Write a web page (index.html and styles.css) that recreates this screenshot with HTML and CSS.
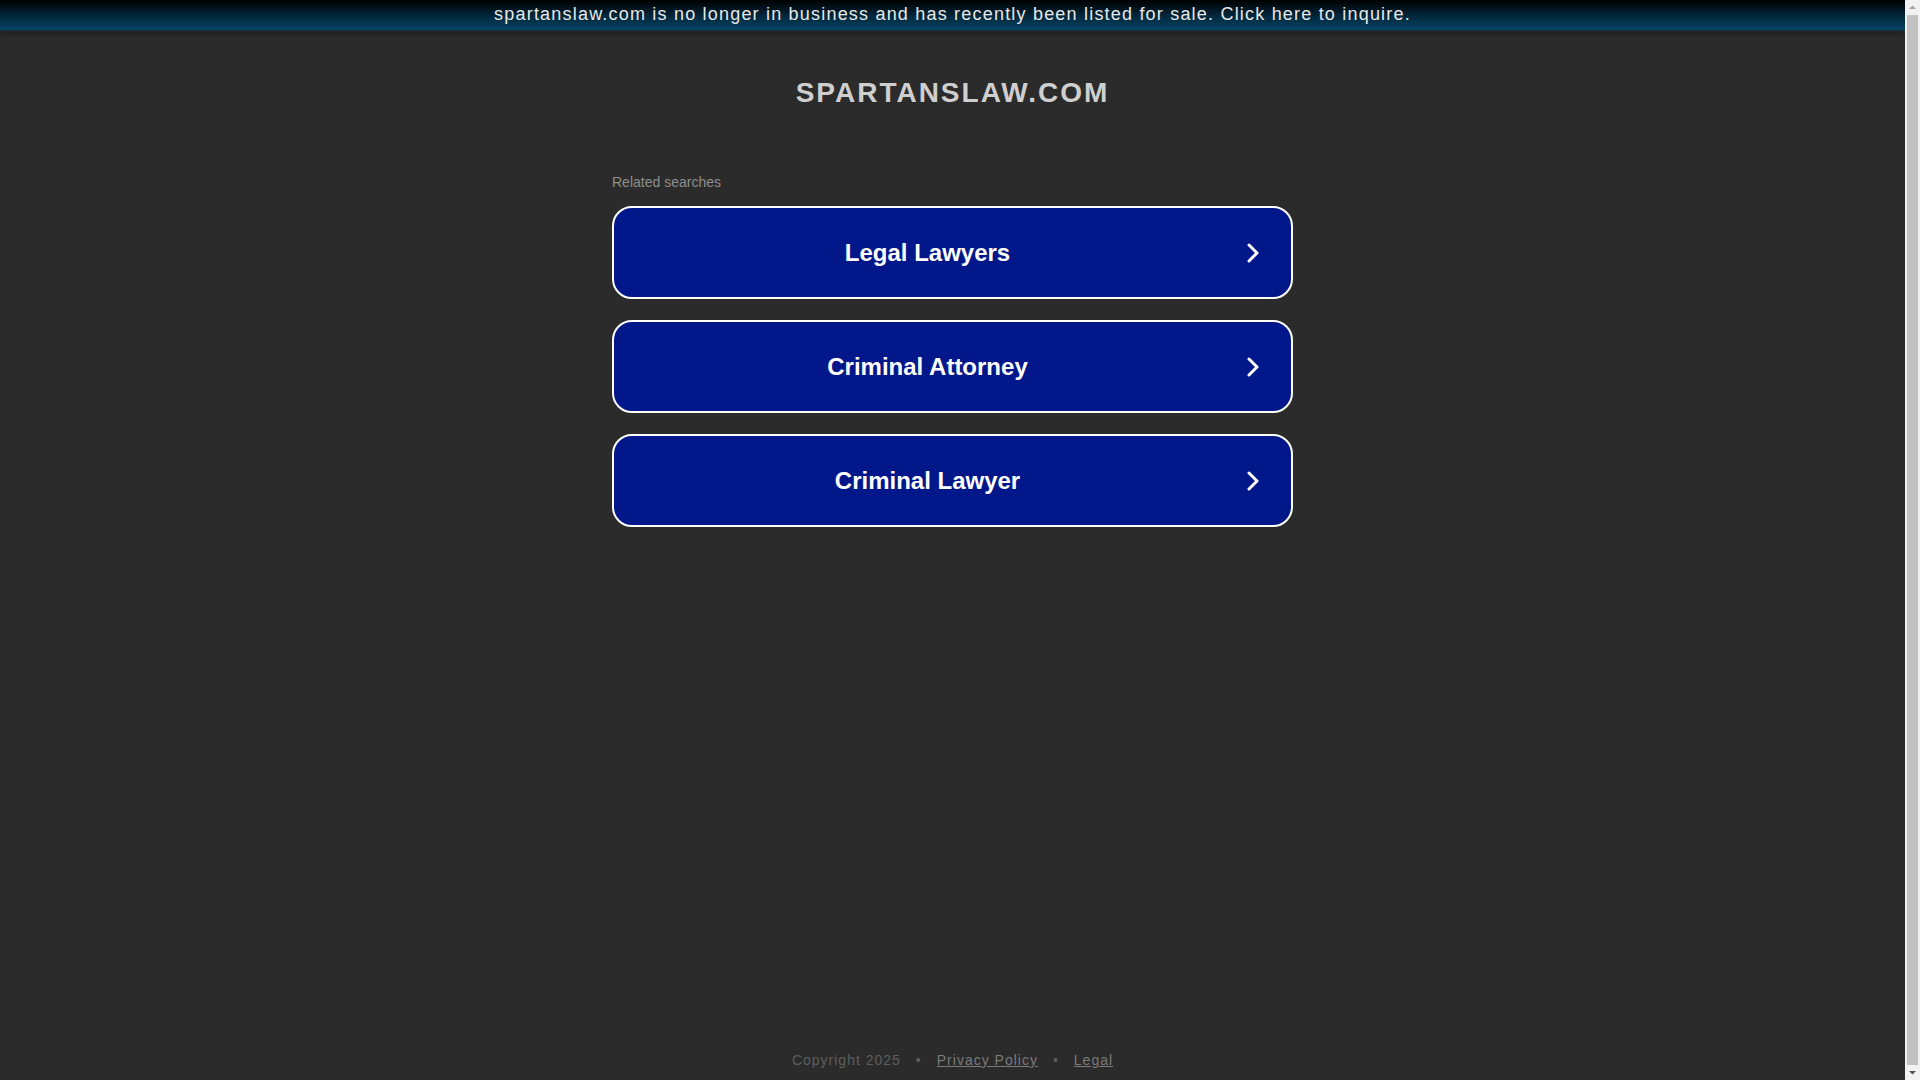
FILE: index.html
```html
<!DOCTYPE html>
<html lang="en">
<head>
<meta charset="utf-8">
<title>spartanslaw.com</title>
<link rel="stylesheet" href="styles.css">
</head>
<body>
<div class="window">
<div class="page">
  <a class="banner" href="#">spartanslaw.com is no longer in business and has recently been listed for sale. Click here to inquire.</a>
  <main class="main">
    <h1 class="title">SPARTANSLAW.COM</h1>
    <div class="related">
      <div class="related-label">Related searches</div>
      <a class="search" href="#">
        <span class="search-text">Legal Lawyers</span>
        <span class="search-arrow"><svg width="12" height="20" viewBox="0 0 12 20"><path d="M2 2 L10 10 L2 18" fill="none" stroke="#fff" stroke-width="3" stroke-linecap="round" stroke-linejoin="round"/></svg></span>
      </a>
      <a class="search" href="#">
        <span class="search-text">Criminal Attorney</span>
        <span class="search-arrow"><svg width="12" height="20" viewBox="0 0 12 20"><path d="M2 2 L10 10 L2 18" fill="none" stroke="#fff" stroke-width="3" stroke-linecap="round" stroke-linejoin="round"/></svg></span>
      </a>
      <a class="search" href="#">
        <span class="search-text">Criminal Lawyer</span>
        <span class="search-arrow"><svg width="12" height="20" viewBox="0 0 12 20"><path d="M2 2 L10 10 L2 18" fill="none" stroke="#fff" stroke-width="3" stroke-linecap="round" stroke-linejoin="round"/></svg></span>
      </a>
    </div>
  </main>
  <footer class="footer">
    <span class="copy">Copyright 2025</span>
    <span class="dot">•</span>
    <a class="flink" href="#">Privacy Policy</a>
    <span class="dot">•</span>
    <a class="flink" href="#">Legal</a>
  </footer>
</div>
<div class="scrollbar">
  <svg class="sb-arrow" width="15" height="15" viewBox="0 0 15 15"><path d="M4 9 L7.5 5.5 L11 9 Z" fill="#a3a3a3"/></svg>
  <div class="sb-thumb"></div>
  <svg class="sb-arrow" width="15" height="15" viewBox="0 0 15 15"><path d="M4 6 L7.5 9.5 L11 6 Z" fill="#505050"/></svg>
</div>
</div>
</body>
</html>
```

FILE: styles.css
```css
html, body {
  margin: 0;
  padding: 0;
  background: #2b2b2b;
  font-family: "Liberation Sans", Arial, sans-serif;
  overflow: hidden;
}
.window {
  display: flex;
  height: 100vh;
}
.page {
  flex: 1;
  min-width: 0;
  display: flex;
  flex-direction: column;
}
.scrollbar {
  width: 15px;
  background: #f1f1f1;
  display: flex;
  flex-direction: column;
}
.sb-arrow {
  display: block;
  flex: none;
}
.sb-thumb {
  flex: 1;
  margin: 0 2px;
  background: #c1c1c1;
}
.banner {
  display: block;
  height: 30px;
  line-height: 28px;
  text-align: center;
  color: #e8e8e8;
  text-decoration: none;
  font-size: 18px;
  letter-spacing: 1.2px;
  background: linear-gradient(to bottom, #000000 0%, #02283d 55%, #064566 100%);
  border-bottom: 2px solid #1d2830;
  box-shadow: 0 2px 6px rgba(0,0,0,0.35);
}
.main {
  flex: 1;
  display: flex;
  flex-direction: column;
  align-items: center;
}
.title {
  margin: 45px 0 0;
  font-size: 28px;
  line-height: 32px;
  font-weight: bold;
  color: #cfcfcf;
  letter-spacing: 2px;
}
.related {
  width: 681px;
  margin-top: 64px;
  display: flex;
  flex-direction: column;
}
.related-label {
  font-size: 14px;
  line-height: 18px;
  color: #8e8e8e;
  margin-bottom: 15px;
}
.search {
  box-sizing: border-box;
  height: 93px;
  margin-bottom: 21px;
  display: flex;
  align-items: center;
  padding: 0 20px;
  background: #02188a;
  border: 2px solid #ffffff;
  border-radius: 20px;
  color: #fff;
  text-decoration: none;
}
.search-text {
  flex: 1;
  text-align: center;
  font-size: 24px;
  font-weight: bold;
}
.search-arrow {
  width: 50px;
  display: flex;
  justify-content: flex-end;
  padding-right: 12px;
  box-sizing: border-box;
}
.footer {
  display: flex;
  justify-content: center;
  align-items: center;
  gap: 12px;
  font-size: 14px;
  line-height: 20px;
  letter-spacing: 1px;
  padding-bottom: 10px;
  color: #5e5e5e;
}
.dot {
  padding: 0 3px;
}
.flink {
  color: #7a7a7a;
  text-decoration: underline;
}
```
